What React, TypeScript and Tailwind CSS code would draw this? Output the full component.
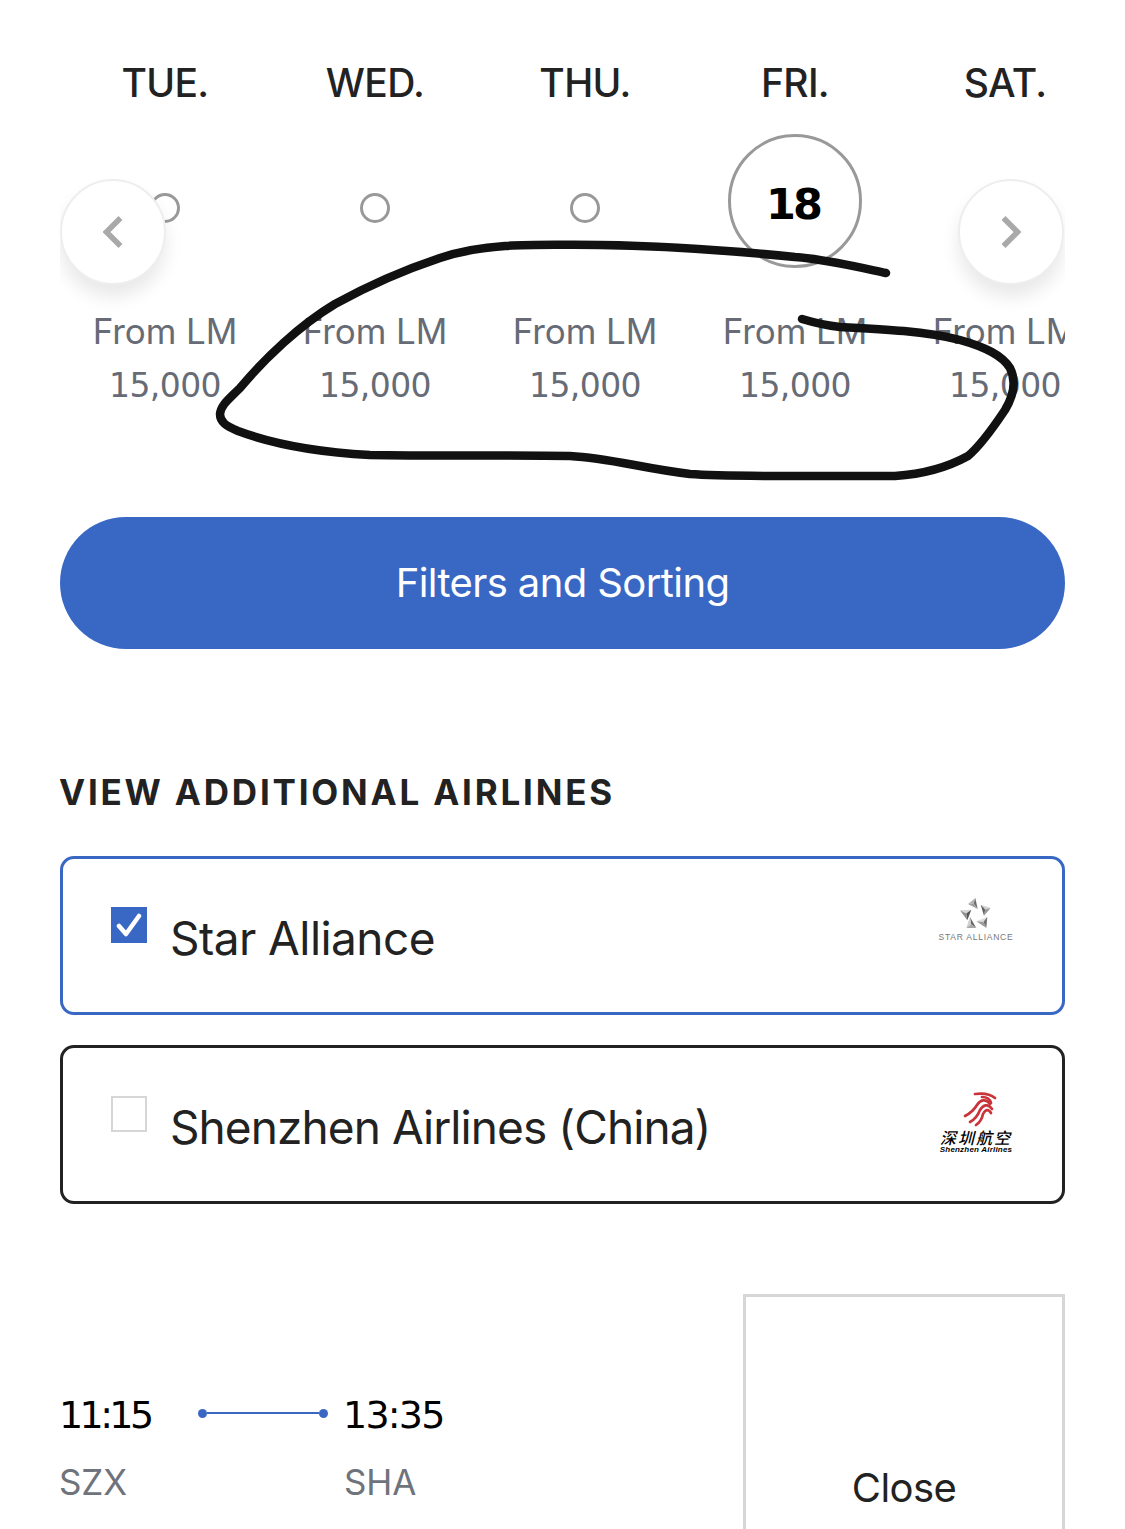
import React from "react";

const days = ["TUE.", "WED.", "THU.", "FRI.", "SAT."];
const sans = "font-['Inter','Liberation_Sans',sans-serif]";
const foot = "font-['DejaVu_Sans',sans-serif]";

function Chevron({ dir }: { dir: "l" | "r" }) {
  return (
    <svg width="20" height="32" viewBox="0 0 20 32" fill="none" stroke="#a9a9a9" strokeWidth="5.5">
      <path d={dir === "l" ? "M17.5 2 L3.5 16 L17.5 30" : "M2.5 2 L16.5 16 L2.5 30"} />
    </svg>
  );
}

function NavButton({ dir }: { dir: "l" | "r" }) {
  return (
    <div className="w-[106px] h-[106px] rounded-full bg-white border-[2px] border-[#eeeeee] shadow-[0_12px_18px_rgba(0,0,0,0.09)] flex items-center justify-center">
      <Chevron dir={dir} />
    </div>
  );
}

function DayColumn({ label, selected }: { label: string; selected: boolean }) {
  return (
    <div className="w-[210px] shrink-0 flex flex-col items-center">
      <div className="text-[39px] leading-[48px] font-medium text-[#222222] tracking-[-0.65px] whitespace-nowrap">{label}</div>
      <div className="h-[134px] mt-[27px] flex items-center justify-center">
        {selected ? (
          <div className="w-[134px] h-[134px] rounded-full border-[3px] border-[#999999] flex items-center justify-center">
            <span className={`${foot} mt-[6px] -ml-[4px] text-[43px] font-bold text-black tracking-[-3px]`}>18</span>
          </div>
        ) : (
          <div className="w-[30px] h-[30px] mt-[14px] rounded-full border-[3px] border-[#999999]" />
        )}
      </div>
      <div className="mt-[36px] text-[35px] leading-[54px] text-[#666b75] tracking-[-0.1px] whitespace-nowrap">From LM</div>
      <div className={`${foot} mt-[1px] text-[33px] leading-[54px] text-[#666b75] tracking-[-0.6px] whitespace-nowrap`}>15,000</div>
    </div>
  );
}

function Pyramid({ a, b, c, shades }: { a: number[]; b: number[]; c: number[]; shades: string[] }) {
  const m = [(a[0] + b[0] + c[0]) / 3, (a[1] + b[1] + c[1]) / 3];
  const p = (q: number[], r: number[]) => `M${q[0]} ${q[1]} L${r[0]} ${r[1]} L${m[0]} ${m[1]} Z`;
  return (
    <g>
      <path d={p(a, b)} fill={shades[0]} />
      <path d={p(b, c)} fill={shades[1]} />
      <path d={p(c, a)} fill={shades[2]} />
    </g>
  );
}

function StarLogo() {
  return (
    <div className="w-[76px] flex flex-col items-center">
      <svg width="32" height="31" viewBox="0 0 32 31">
        <Pyramid a={[8, 6]} b={[15.3, 0]} c={[17.7, 11]} shades={["#b5b5b5", "#6e6e6e", "#a0a0a0"]} />
        <Pyramid a={[20.7, 6.7]} b={[30.7, 10]} c={[24, 17.7]} shades={["#d0d0d0", "#9a9a9a", "#5f5f5f"]} />
        <Pyramid a={[0, 12.3]} b={[11.3, 11.7]} c={[7.3, 22.3]} shades={["#d8d8d8", "#555555", "#8e8e8e"]} />
        <Pyramid a={[10, 19]} b={[16.3, 30]} c={[6.3, 30]} shades={["#6a6a6a", "#a8a8a8", "#cfcfcf"]} />
        <Pyramid a={[16.3, 23.3]} b={[27.3, 19]} c={[26.3, 30]} shades={["#dddddd", "#707070", "#9a9a9a"]} />
      </svg>
      <div className="mt-[3px] text-[8.5px] leading-[10px] text-[#777777] tracking-[0.75px] whitespace-nowrap font-['Liberation_Sans',sans-serif]">STAR ALLIANCE</div>
    </div>
  );
}

function ShenzhenLogo() {
  return (
    <div className="w-[76px] flex flex-col items-center">
      <svg className="ml-[7px]" width="34" height="35" viewBox="0 0 34 35" fill="none" stroke="#c8343a" strokeWidth="2.7" strokeLinecap="round">
        <path d="M12 2 C19 1 26 1 32 6" />
        <path d="M19 5 C24 5 27 7 28 11" />
        <path d="M27 12 C23 6 17 8 14 13 C11 18 6 22 2 24" />
        <path d="M29 17 C25 11 20 13 17 18 C15 23 11 28 7 30" />
        <path d="M28 21 C25 16 22 18 20 22 C19 27 16 31 13 33" />
      </svg>
      <div className="mt-[2px] text-[16px] leading-[16px] text-black font-medium tracking-[2px] italic whitespace-nowrap font-['Noto_Sans_CJK_SC',sans-serif]">深圳航空</div>
      <div className="text-[8px] leading-[10px] text-black font-bold italic tracking-[0.2px] whitespace-nowrap font-['Liberation_Sans',sans-serif]">Shenzhen Airlines</div>
    </div>
  );
}

function AirlineCard({ name, checked, logo, className }: { name: string; checked: boolean; logo: React.ReactNode; className: string }) {
  return (
    <div className={`relative flex items-start rounded-[14px] border-[3px] pl-[48px] pr-[48px] ${checked ? "border-[#3968c4]" : "border-[#222222]"} ${className}`}>
      {checked ? (
        <div className="w-[36px] h-[36px] mt-[48px] bg-[#3968c4] flex items-center justify-center shrink-0">
          <svg width="26" height="24" viewBox="0 0 26 24" fill="none" stroke="#ffffff" strokeWidth="4.5" strokeLinecap="round" strokeLinejoin="round">
            <path d="M3 13 L10 21 L23 3" />
          </svg>
        </div>
      ) : (
        <div className="w-[36px] h-[36px] mt-[48px] border-[2px] border-[#d6d6d6] shrink-0" />
      )}
      <div className={`ml-[23px] mt-[51px] text-[46px] leading-[56px] text-[#222222] whitespace-nowrap ${checked ? "tracking-[-0.55px]" : "tracking-[-0.92px]"}`}>{name}</div>
      <div className={`ml-auto ${checked ? "mt-[39px]" : "mt-[44px]"}`}>{logo}</div>
    </div>
  );
}

export default function App() {
  return (
    <div className={`${sans} relative w-[1125px] h-[1529px] overflow-hidden bg-white`}>
      <div className="px-[60px] pt-[59px] flex flex-col">
        <div className="relative overflow-hidden">
          <div className="flex">
            {days.map((d) => (
              <DayColumn key={d} label={d} selected={d === "FRI."} />
            ))}
          </div>
          <div className="absolute left-0 top-[120px] right-0 flex justify-between h-[170px] overflow-hidden">
            <NavButton dir="l" />
            <div className="mr-[1px]"><NavButton dir="r" /></div>
          </div>
        </div>

        <div className="mt-[104px] h-[132px] rounded-full bg-[#3968c4] flex items-center justify-center text-white text-[40px] tracking-[-0.6px]">
          Filters and Sorting
        </div>

        <div className="mt-[123px] -ml-[1px] text-[35px] leading-[40px] font-bold text-[#222222] tracking-[2.8px]">VIEW ADDITIONAL AIRLINES</div>

        <AirlineCard className="mt-[44px] h-[159px]" name="Star Alliance" checked logo={<StarLogo />} />
        <AirlineCard className="mt-[30px] h-[159px]" name="Shenzhen Airlines (China)" checked={false} logo={<ShenzhenLogo />} />

        <div className="mt-[90px] flex justify-between items-start">
          <div className="pt-[97px]">
            <div className="flex items-center">
              <div className={`${foot} w-[138px] -ml-[1px] text-[38px] leading-[48px] text-black tracking-[-3.6px]`}>11:15</div>
              <div className="w-[130px] mb-[4px] ml-[1px] flex items-center">
                <div className="w-[9px] h-[9px] rounded-full bg-[#3968c4] shrink-0" />
                <div className="h-[2px] flex-1 bg-[#3968c4]" />
                <div className="w-[9px] h-[9px] rounded-full bg-[#3968c4] shrink-0" />
              </div>
              <div className={`${foot} ml-[15px] text-[38px] leading-[48px] text-black tracking-[-1.8px]`}>13:35</div>
            </div>
            <div className="mt-[21px] -ml-[1px] flex text-[35px] leading-[44px] tracking-[-0.1px] text-[#6f737b]">
              <div className="w-[285px]">SZX</div>
              <div>SHA</div>
            </div>
          </div>
          <div className="w-[322px] h-[300px] border-[3px] border-[#d6d6d6] flex justify-center pt-[167px]">
            <span className="text-[40px] leading-[48px] text-[#222222] tracking-[-0.6px]">Close</span>
          </div>
        </div>
      </div>

      <svg className="absolute left-0 top-0 pointer-events-none" width="1125" height="1529" viewBox="0 0 1125 1529" fill="none">
        <path
          d="M886 273 C858 267 825 259 795 257 C745 252 680 246 600 245 C565 245 530 244 505 246 C475 248 458 252 440 258 C410 268 375 282 335 304 C300 325 265 358 240 388 C228 400 221 405 220 414 C220 422 226 426 238 431 C270 443 315 452 370 455 C430 456 510 455 570 456 C610 458 640 468 690 474 C730 477 840 476 895 476 C925 474 950 466 968 456 C980 446 995 425 1005 410 C1014 395 1016 380 1010 368 C1002 355 985 347 960 340 C925 331 880 329 840 327 C822 325 812 322 802 319"
          stroke="#111111"
          strokeWidth="8.5"
          strokeLinecap="round"
          strokeLinejoin="round"
        />
      </svg>
    </div>
  );
}
